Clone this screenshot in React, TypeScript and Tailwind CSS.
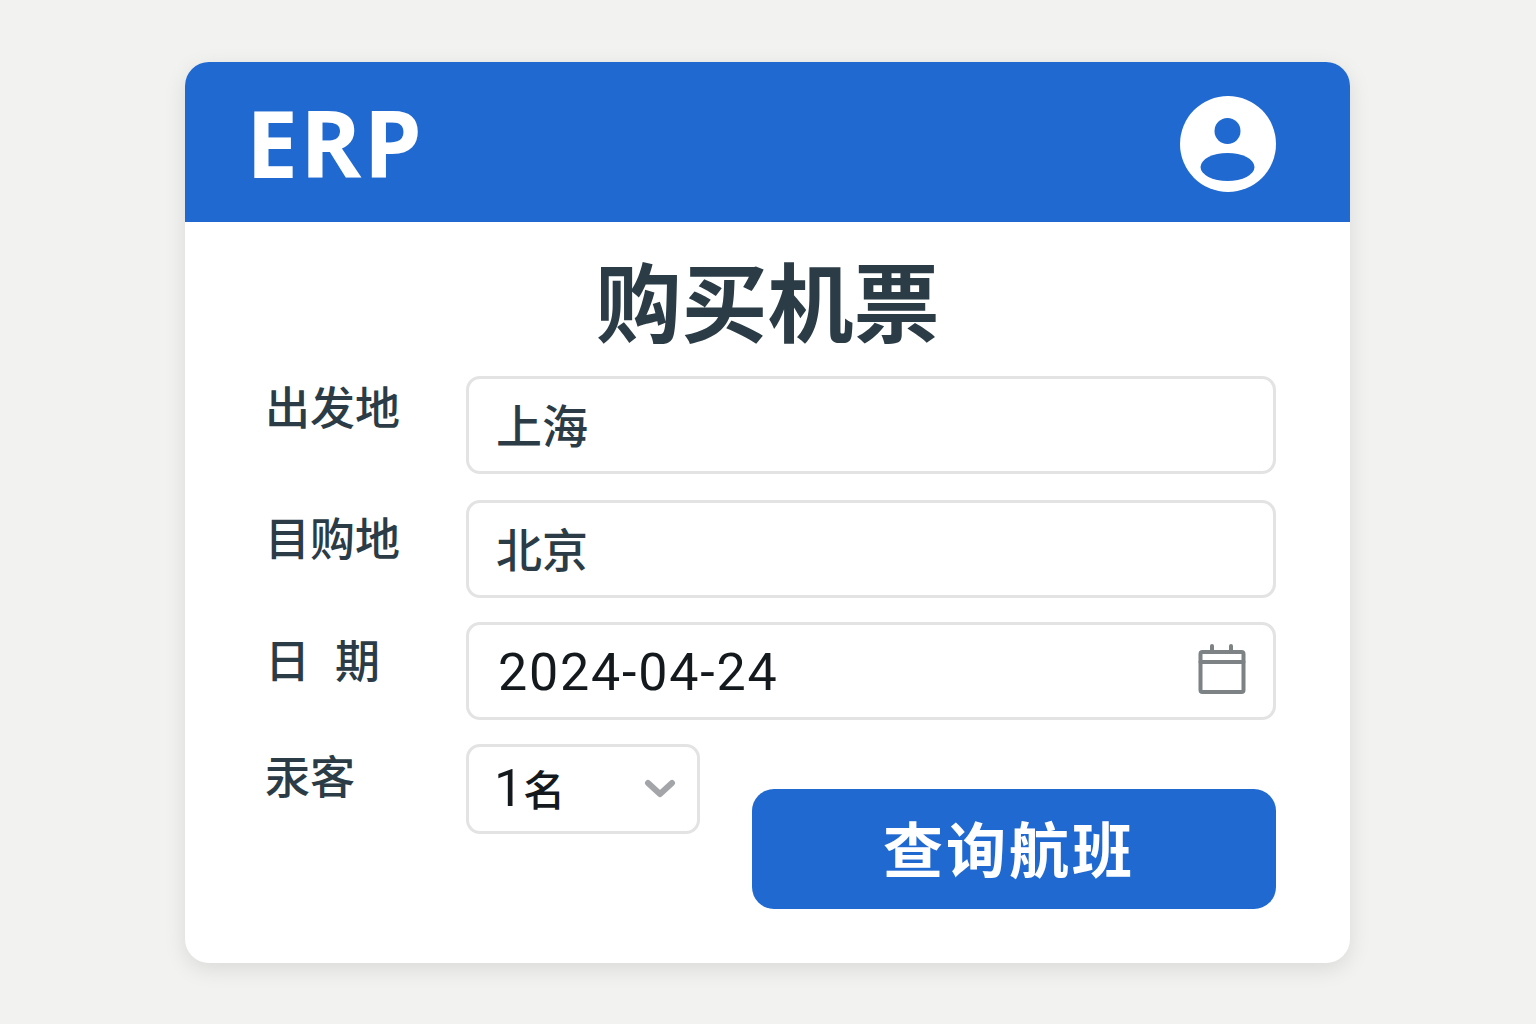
import React from 'react';

const cjk = "font-['Noto_Sans_CJK_SC','Noto_Sans',sans-serif]";

const Field: React.FC<{ label: React.ReactNode; value: string; className?: string; labelClass?: string }> = ({ label, value, className, labelClass }) => (
    <div className={`flex h-[98px] ${className ?? ''}`}>
        <div className={`w-[201px] text-[45px] font-medium leading-[58px] text-[#2b3c46] ${labelClass ?? ''}`}>{label}</div>
        <div className="flex flex-1 items-center rounded-[14px] border-[3px] border-[#e3e3e3] bg-white pb-[4px] pl-[27px] text-[46px] font-medium leading-none text-[#2b3c46]">
            {value}
        </div>
    </div>
);

const App: React.FC = () => {
    return (
        <div className={`h-[1024px] w-[1536px] overflow-hidden bg-[#f2f2f1] pl-[185px] pt-[62px] ${cjk}`}>
            <div className="h-[901px] w-[1165px] overflow-hidden rounded-[24px] bg-white shadow-[0_6px_22px_rgba(0,0,0,0.10)]">
                <header className="flex h-[160px] items-center justify-between bg-[#1f69d0] pl-[61px] pr-[74px]">
                    <span className="font-['Open_Sans',sans-serif] text-[93px] font-bold leading-none tracking-[2px] text-white">ERP</span>
                    <svg className="mt-[4px]" width="96" height="96" viewBox="0 0 96 96">
                        <circle cx="48" cy="48" r="48" fill="#fff" />
                        <circle cx="47.5" cy="35" r="13" fill="#1f69d0" />
                        <ellipse cx="47.5" cy="71" rx="27" ry="14" fill="#1f69d0" />
                    </svg>
                </header>

                <div className="pl-[80px] pr-[74px]">
                    <h1 className="ml-[-80px] mr-[-74px] pt-[27px] text-center text-[86px] font-bold leading-[100px] text-[#2b3c46]">购买机票</h1>

                    <div className="mt-[27px] flex flex-col">
                        <Field label="出发地" value="上海" labelClass="pt-[1px]" />
                        <Field label="目购地" value="北京" className="mt-[26px]" labelClass="pt-[8px]" />

                        <div className="mt-[24px] flex h-[98px]">
                            <div className="w-[201px] pt-[8px] text-[45px] font-medium leading-[58px] text-[#2b3c46]">日<span className="ml-[25px]">期</span></div>
                            <div className="flex flex-1 items-center justify-between rounded-[14px] border-[3px] border-[#e3e3e3] bg-white pl-[29px] pr-[27px] font-['Roboto',sans-serif] text-[52px] leading-none tracking-[1.8px] text-[#14191e]">
                                <span className="pt-[4px]">2024-04-24</span>
                                <svg className="mb-[4px]" width="48" height="50" viewBox="0 0 48 50" fill="none" stroke="#7d8284" strokeWidth="4" strokeLinecap="round" strokeLinejoin="round">
                                    <rect x="2.5" y="8" width="43" height="40" rx="2" />
                                    <path d="M2.5 18h43M14 2v6M33 2v6" />
                                </svg>
                            </div>
                        </div>

                        <div className="mt-[24px] flex items-start">
                            <div className="w-[201px] pt-[2px] text-[45px] font-medium leading-[58px] text-[#2b3c46]">汞客</div>
                            <div className="flex h-[90px] w-[234px] items-center justify-between rounded-[14px] border-[3px] border-[#e3e3e3] bg-white pl-[25px] pr-[21px] text-[42px] font-medium leading-none text-[#14191e]">
                                <span><span className="font-['Roboto',sans-serif] text-[52px] font-normal">1</span>名</span>
                                <svg width="32" height="20" viewBox="0 0 32 20" fill="none" stroke="#a3a5a8" strokeWidth="6" strokeLinecap="round" strokeLinejoin="round">
                                    <path d="M4 4l12 11L28 4" />
                                </svg>
                            </div>
                            <button className="ml-[52px] mt-[45px] h-[120px] flex-1 rounded-[22px] bg-[#1f69d0] pb-[4px] pr-[10px] text-[60px] font-bold leading-none tracking-[3px] text-white">
                                查询航班
                            </button>
                        </div>
                    </div>
                </div>
            </div>
        </div>
    );
};

export default App;
